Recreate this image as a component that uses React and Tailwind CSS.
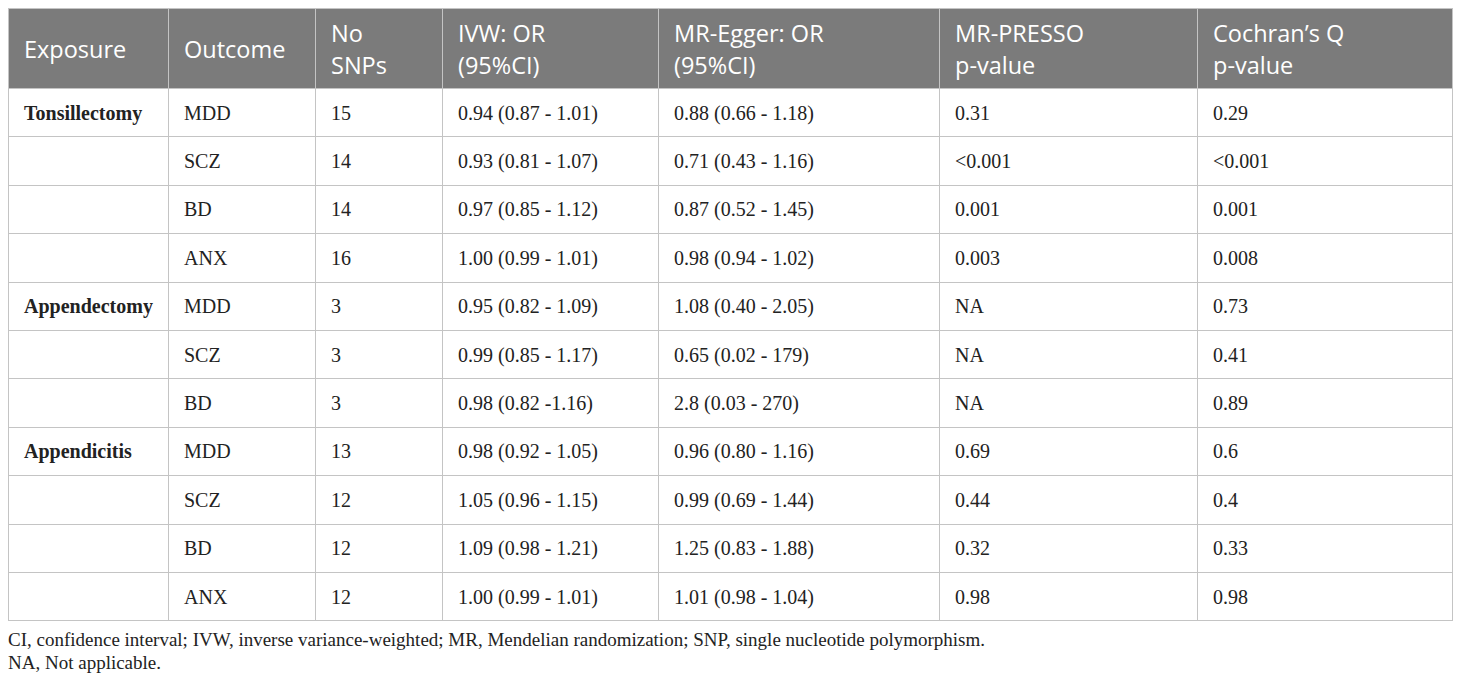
const rows = [
  ["Tonsillectomy", "MDD", "15", "0.94 (0.87 - 1.01)", "0.88 (0.66 - 1.18)", "0.31", "0.29"],
  ["", "SCZ", "14", "0.93 (0.81 - 1.07)", "0.71 (0.43 - 1.16)", "<0.001", "<0.001"],
  ["", "BD", "14", "0.97 (0.85 - 1.12)", "0.87 (0.52 - 1.45)", "0.001", "0.001"],
  ["", "ANX", "16", "1.00 (0.99 - 1.01)", "0.98 (0.94 - 1.02)", "0.003", "0.008"],
  ["Appendectomy", "MDD", "3", "0.95 (0.82 - 1.09)", "1.08 (0.40 - 2.05)", "NA", "0.73"],
  ["", "SCZ", "3", "0.99 (0.85 - 1.17)", "0.65 (0.02 - 179)", "NA", "0.41"],
  ["", "BD", "3", "0.98 (0.82 -1.16)", "2.8 (0.03 - 270)", "NA", "0.89"],
  ["Appendicitis", "MDD", "13", "0.98 (0.92 - 1.05)", "0.96 (0.80 - 1.16)", "0.69", "0.6"],
  ["", "SCZ", "12", "1.05 (0.96 - 1.15)", "0.99 (0.69 - 1.44)", "0.44", "0.4"],
  ["", "BD", "12", "1.09 (0.98 - 1.21)", "1.25 (0.83 - 1.88)", "0.32", "0.33"],
  ["", "ANX", "12", "1.00 (0.99 - 1.01)", "1.01 (0.98 - 1.04)", "0.98", "0.98"],
];

const headers = [
  ["Exposure"],
  ["Outcome"],
  ["No", "SNPs"],
  ["IVW: OR", "(95%CI)"],
  ["MR-Egger: OR", "(95%CI)"],
  ["MR-PRESSO", "p-value"],
  ["Cochran\u2019s Q", "p-value"],
];

const cols = ["w-[160px]", "w-[147px]", "w-[127px]", "w-[216px]", "w-[281px]", "w-[258px]", "w-[255px]"];

export default function App() {
  return (
    <div className="bg-white w-[1460px] h-[682px] pt-[8px] pl-[8px] font-['Liberation_Serif',serif] text-[#222]">
      <table className="table-fixed border-collapse w-[1444px]">
        <colgroup>
          {cols.map((c, i) => (
            <col key={i} className={c} />
          ))}
        </colgroup>
        <thead>
          <tr className="h-[80px] bg-[#7b7b7b]">
            {headers.map((h, i) => (
              <th
                key={i}
                className="border border-[#c4c4c4] px-[15px] text-left align-middle font-normal text-white text-[23.5px] leading-[32px] font-['Open_Sans',sans-serif]"
              >
                {h.map((line, j) => (
                  <div key={j}>{line}</div>
                ))}
              </th>
            ))}
          </tr>
        </thead>
        <tbody>
          {rows.map((r, i) => (
            <tr key={i} className="h-[48.4px]">
              {r.map((c, j) => (
                <td
                  key={j}
                  className={
                    "border border-[#c4c4c4] px-[15px] align-middle text-[20px] leading-none " +
                    (j === 0 ? "font-bold" : "")
                  }
                >
                  {c}
                </td>
              ))}
            </tr>
          ))}
        </tbody>
      </table>
      <div className="mt-[7px] text-[19px] leading-[23px]">
        <p>CI, confidence interval; IVW, inverse variance-weighted; MR, Mendelian randomization; SNP, single nucleotide polymorphism.</p>
        <p>NA, Not applicable.</p>
      </div>
    </div>
  );
}
